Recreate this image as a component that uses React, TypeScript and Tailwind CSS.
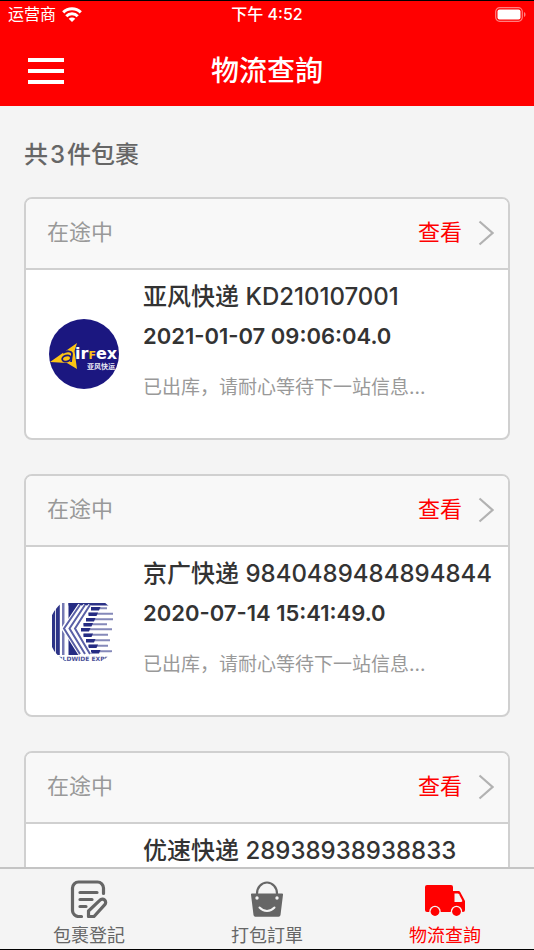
import type { ReactNode } from 'react';
import clsx from 'clsx';

type Parcel = {
  id: string;
  status: string;
  carrier: string;
  time?: string;
  message?: string;
  logo?: ReactNode;
};

function AirfexLogo() {
  return (
    <svg viewBox="0 0 70 70" className="size-[70px]" role="img" aria-label="亚风快运">
      <circle cx="35" cy="35" r="35" fill="#1b1780" />
      <path d="M1 43 28 24 25.500 32 28 50 18 44Z" fill="#fcc414" />
      <path d="M14 34C17 31.500 23.500 31.500 23 35.500L22 43" fill="none" stroke="#1b1780" strokeWidth="1.800" />
      <ellipse cx="17.500" cy="39.500" rx="4.400" ry="3" fill="#fcc414" stroke="#1b1780" strokeWidth="1.800" transform="rotate(-15 17.500 39.500)" />
      <text x="26" y="40" fontSize="16" fontWeight="700" fill="#fff" fontFamily="'DejaVu Sans', sans-serif">
        ir<tspan fontSize="11" fill="#fcc414">F</tspan>ex
      </text>
      <text x="38" y="50" fontSize="7" fontWeight="700" fill="#e8e8f4" fontFamily="'Liberation Sans', 'Noto Sans CJK SC', sans-serif">
        亚风快运
      </text>
    </svg>
  );
}

const STRIPES = [
  { y: 11, end: 58 },
  { y: 16.500, end: 64 },
  { y: 22, end: 64 },
  { y: 27, end: 58 },
  { y: 32, end: 63 },
  { y: 37.500, end: 59 },
  { y: 43, end: 61 },
  { y: 48.500, end: 59 },
  { y: 54, end: 63 },
];

function KingLogo() {
  return (
    <svg viewBox="0 0 70 70" className="size-[70px]" role="img" aria-label="京广快递">
      <clipPath id="king-clip">
        <circle cx="34.500" cy="35" r="35.500" />
      </clipPath>
      <g clipPath="url(#king-clip)">
        <path d="M3 7h3v52H3zM6.800 7h4v52h-4z" fill="#2c3387" />
        <path d="M13 7h2.500v20L13 31zM13 34l2.500 4v21H13z" fill="#7579b2" />
        <path d="M19.500 7h42v2.500h-42z" fill="#2c3387" />
        {STRIPES.map((s, i) => {
          const start = 32 + Math.abs(i - 4) * 2.5;
          return (
            <g key={s.y}>
              <path d={`M${start} ${s.y + 1.2}H${s.end}`} stroke="#8589b9" strokeWidth="2" />
              <path d={`M${start} ${s.y}h9.500l-1.500 3.600h-8Z`} fill="#252c83" />
            </g>
          );
        })}
        <path d="M19.500 7h11L19.500 24zM19.500 59h11L19.500 41z" fill="#252c83" />
        <path d="M31 9 15 32.500 31 58M36 9 20.500 32.500 36 58M41 9 26 32.500 41 58" fill="none" stroke="#fff" strokeWidth="4" />
        <path d="M31 9 15 32.500 31 58M36 9 20.500 32.500 36 58M41 9 26 32.500 41 58" fill="none" stroke="#5a60a6" strokeWidth="2" />
        <path d="M0 59h70v11H0z" fill="#fff" />
        <text x="9" y="64.500" fontSize="6" fontWeight="700" fill="#4a4f98" fontFamily="'DejaVu Sans', sans-serif">
          RLDWIDE EXPR
        </text>
      </g>
    </svg>
  );
}

const PARCELS: Parcel[] = [
  {
    id: 'KD210107001',
    status: '在途中',
    carrier: '亚风快递',
    time: '2021-01-07 09:06:04.0',
    message: '已出库，请耐心等待下一站信息...',
    logo: <AirfexLogo />,
  },
  {
    id: '9840489484894844',
    status: '在途中',
    carrier: '京广快递',
    time: '2020-07-14 15:41:49.0',
    message: '已出库，请耐心等待下一站信息...',
    logo: <KingLogo />,
  },
  { id: '28938938938833', status: '在途中', carrier: '优速快递' },
];

function StatusBar() {
  return (
    <div className="grid h-[26px] grid-cols-3 items-center px-2 text-[16px] leading-none">
      <div className="flex items-center gap-1.5">
        <span>运营商</span>
        <svg viewBox="0 0 20 15" className="h-[15px] w-5" fill="none" stroke="currentColor" strokeWidth="3">
          <path d="M1.200 5.400a12.600 12.600 0 0 1 17.600 0M4.300 9.200a8 8 0 0 1 11.400 0" />
          <path d="M10 15 6.700 11.800a4.700 4.700 0 0 1 6.600 0Z" fill="currentColor" stroke="none" />
        </svg>
      </div>
      <span className="text-center font-medium">下午 4:52</span>
      <svg viewBox="0 0 32 15" className="h-[15px] w-8 justify-self-end" fill="none">
        <rect x="1.700" y="0.700" width="26.600" height="13.600" rx="4" stroke="#ff8080" strokeWidth="1.200" />
        <rect x="3.500" y="2.500" width="23" height="10" rx="2" fill="#fff" />
        <path d="M30 5v5c2-.8 2-4.200 0-5Z" fill="#ff8080" />
      </svg>
    </div>
  );
}

function ParcelCard({ parcel }: { parcel: Parcel }) {
  return (
    <article className="overflow-hidden rounded-lg border-2 border-[#d0d0d0] bg-white">
      <div className="flex h-[71px] items-center justify-between border-b-2 border-[#d0d0d0] bg-[#f8f8f8] pr-3.5 pb-0.5 pl-[21px] text-[22px]">
        <span className="text-[#999]">{parcel.status}</span>
        <button type="button" className="flex items-center gap-4 text-[#f00]">
          查看
          <svg viewBox="0 0 16 26" className="h-[26px] w-4" fill="none" stroke="#b2b2b2" strokeWidth="2.200">
            <path d="M1.500 1.500 14.500 13 1.500 24.500" />
          </svg>
        </button>
      </div>
      <div className="flex min-h-[168px] items-center gap-6 pl-[23px] text-[#333]">
        <div className="size-[70px] shrink-0">{parcel.logo}</div>
        <div className="min-w-0 self-start pt-2 whitespace-nowrap">
          <h2 className="text-[24px] leading-[38px] font-medium">
            {parcel.carrier} {parcel.id}
          </h2>
          {parcel.time && <p className="text-[22px] leading-10 font-semibold">{parcel.time}</p>}
          {parcel.message && (
            <p className="mt-3.5 text-[19px] leading-9 text-[#999]">{parcel.message}</p>
          )}
        </div>
      </div>
    </article>
  );
}

function FormIcon() {
  return (
    <svg viewBox="0 0 38 38" className="size-[38px]" fill="none" stroke="currentColor" strokeWidth="3.200" strokeLinecap="round" strokeLinejoin="round">
      <path d="M11.500 36.500H8.500a6 6 0 0 1-6-6V8a6 6 0 0 1 6-6h19a6 6 0 0 1 6 6v5.500" />
      <path d="M10 12.500h17M10 19.500h12M10 26.500h6" />
      <path d="M18.500 36.500v-5.500L30 20.200a3.200 3.200 0 0 1 4.800 4.400L24 36.500Z" />
    </svg>
  );
}

function BagIcon() {
  return (
    <svg viewBox="0 0 38 38" className="size-[38px]" fill="none">
      <path d="M9 15v-1.500a10 11 0 0 1 20 0V15" stroke="currentColor" strokeWidth="2.200" />
      <path d="M4 13.500h30a1 1 0 0 1 1 1.200L32.500 35a2 2 0 0 1-2 1.800h-23A2 2 0 0 1 5.500 35L3 14.700a1 1 0 0 1 1-1.200Z" fill="currentColor" />
      <circle cx="9" cy="18" r="1.700" fill="#f4f4f4" />
      <circle cx="29" cy="18" r="1.700" fill="#f4f4f4" />
      <path d="M11.500 27.500c4 4.500 11 4.500 15 0" stroke="#f4f4f4" strokeWidth="2" strokeLinecap="round" />
    </svg>
  );
}

function TruckIcon() {
  return (
    <svg viewBox="0 0 42 38" className="h-[38px] w-[42px]">
      <path d="M3 5h24a2 2 0 0 1 2 2v4h5.500a2 2 0 0 1 1.700 1L40.500 20a3 3 0 0 1 .5 1.600V30a2 2 0 0 1-2 2H3a2 2 0 0 1-2-2V7a2 2 0 0 1 2-2Z" fill="currentColor" />
      <path d="M30.500 13.500h3.200c.6 0 1 .3 1.300.8l3 5.700c.6 1.200.2 2-1 2h-6.500Z" fill="#f4f4f4" />
      <circle cx="11" cy="31.500" r="5.700" fill="#f4f4f4" />
      <circle cx="32.500" cy="31.500" r="5.700" fill="#f4f4f4" />
      <circle cx="11" cy="31.500" r="4.400" fill="currentColor" />
      <circle cx="32.500" cy="31.500" r="4.400" fill="currentColor" />
    </svg>
  );
}

const TABS = [
  { label: '包裹登記', icon: <FormIcon /> },
  { label: '打包訂單', icon: <BagIcon /> },
  { label: '物流查詢', icon: <TruckIcon />, active: true },
];

export default function App() {
  return (
    <div className="flex h-screen flex-col border-y border-black bg-[#f4f4f4] font-['Inter','Noto_Sans_CJK_SC',sans-serif]">
      <header className="shrink-0 bg-[#f00] text-white">
        <StatusBar />
        <div className="grid h-[79px] grid-cols-[1fr_auto_1fr] items-center px-7 pt-2">
          <button type="button" aria-label="菜单" className="flex w-9 flex-col gap-[7px]">
            <span className="h-1 bg-white" />
            <span className="h-1 bg-white" />
            <span className="h-1 bg-white" />
          </button>
          <h1 className="font-['Inter','Noto_Sans_CJK_TC',sans-serif] text-[28px] leading-none font-medium">
            物流查詢
          </h1>
        </div>
      </header>

      <main className="min-h-0 flex-1 overflow-y-auto px-6 [scrollbar-width:none]">
        <p className="pt-8 pb-[25px] text-[24px] leading-[34px] font-medium text-[#666]">
          共<span className="mx-0.5">3</span>件包裹
        </p>
        <div className="flex flex-col gap-[34px]">
          {PARCELS.map((parcel) => (
            <ParcelCard key={parcel.id} parcel={parcel} />
          ))}
        </div>
      </main>

      <nav className="grid h-[82px] shrink-0 grid-cols-3 border-t-2 border-[#c4c4c4] font-['Inter','Noto_Sans_CJK_TC',sans-serif]">
        {TABS.map((tab) => (
          <a
            key={tab.label}
            href="#"
            className={clsx(
              'flex flex-col items-center gap-1.5 pt-[11px] text-[18px] leading-6',
              tab.active ? 'text-[#f00]' : 'text-[#666]',
            )}
          >
            {tab.icon}
            {tab.label}
          </a>
        ))}
      </nav>
    </div>
  );
}
